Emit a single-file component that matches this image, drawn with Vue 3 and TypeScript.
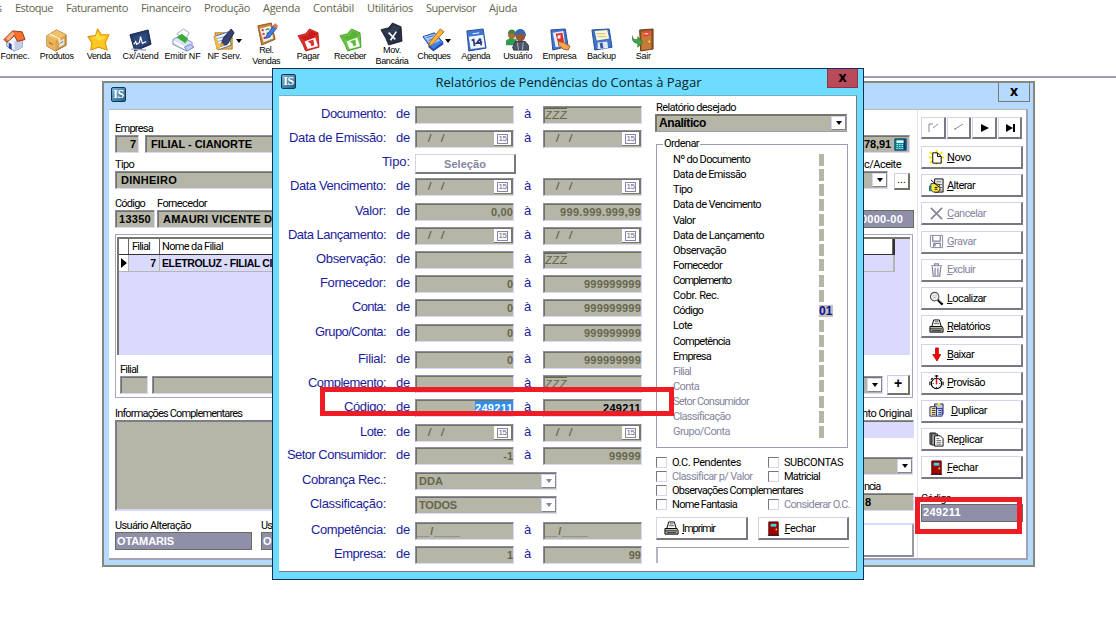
<script setup lang="ts">
interface Row {
  label: string
  w: number
  kind: 'text' | 'date' | 'button' | 'combo'
  from?: string
  to?: string
  left?: boolean
  active?: boolean
}

// Spreads the letters of a label over the given width.
const vFit = {
  mounted(el: HTMLElement, binding: { value: number }) {
    const width = el.getBoundingClientRect().width
    const count = (el.textContent || '').trim().length
    if (binding.value && count) el.style.letterSpacing = `${(binding.value - width) / count}px`
  },
}

const menu: [string, number][] = [
  ['Estoque', 38], ['Faturamento', 62], ['Financeiro', 50], ['Produção', 46], ['Agenda', 37],
  ['Contábil', 41], ['Utilitários', 46], ['Supervisor', 50], ['Ajuda', 28],
]

const tools: { icon: string; lines: [string, number][]; drop?: boolean }[] = [
  { icon: 'house', lines: [['Fornec.', 29]] },
  { icon: 'box', lines: [['Produtos', 34]] },
  { icon: 'star', lines: [['Venda', 24]] },
  { icon: 'board', lines: [['Cx/Atend', 36]] },
  { icon: 'print', lines: [['Emitir NF', 36]] },
  { icon: 'note', lines: [['NF Serv.', 34]], drop: true },
  { icon: 'clip', lines: [['Rel.', 14], ['Vendas', 28]] },
  { icon: 'red', lines: [['Pagar', 23]] },
  { icon: 'green', lines: [['Receber', 32]] },
  { icon: 'black', lines: [['Mov.', 18], ['Bancária', 33]] },
  { icon: 'cheque', lines: [['Cheques', 33]], drop: true },
  { icon: 'cal', lines: [['Agenda', 29]] },
  { icon: 'users', lines: [['Usuário', 29]] },
  { icon: 'company', lines: [['Empresa', 34]] },
  { icon: 'floppy', lines: [['Backup', 29]] },
  { icon: 'exit', lines: [['Sair', 15]] },
]

const card = (a: string, b: string, inner: string) =>
  `<path d="M1 8 9 6 13 1l9 4 1 15-14 4-3-7z" fill="${a}" stroke="${b}" stroke-width=".8"/><path d="m3 9 8-1 3-5 7 3-3 4-10 3z" fill="${inner}"/>`

const icons: Record<string, string> = {
  house: '<path d="M4 12v7l8 5 8-4v-8l-8-6z" fill="#f0f3fb" stroke="#5567a0" stroke-width=".8"/><path d="m12 14 8-3v9l-8 4z" fill="#c3cdec"/><path d="M1 12 10 3l10 1 3 8-8 2-3-6-8 7z" fill="#f8702a" stroke="#8b3a22" stroke-width="1"/><path d="m10 4-7 7 3 2 6-7z" fill="#ffb083"/><path d="M6 15l3 2v6l-3-2z" fill="#2639a0"/>',
  box: '<path d="M2 8 12 2l10 5v11l-11 6-9-5z" fill="#dca24a" stroke="#9b6a28"/><path d="M2 8l9 5v11l-9-5z" fill="#e9b45d"/><path d="M2 8 12 2l10 5-11 6z" fill="#f0c06b"/><path d="m6 6 10 5v4l-2-1v-3L4 7z" fill="#fff0c8"/><path d="m15 14 5-3v6l-5 3z" fill="#dfe9fa"/><path d="m4 15 4 2M16 16l3-2" stroke="#8a5b20"/>',
  star: '<path d="m11 1 4 6 8 0-4 8 2 8-9-3-8 3 1-8-4-6 8-1z" fill="#ffc821" stroke="#e39312" stroke-width="1.2" stroke-linejoin="round"/><path d="m11 4 2 5 7 0-6 4-9-3 4-1z" fill="#ffe046"/>',
  board: '<path d="m1 7 19-5 3 15-17 7z" fill="#253d6b" stroke="#16264c"/><path d="m4 9 14-4 2 11-13 5z" fill="#2f4a7c"/><path d="m5 17 2-3 1 3 3-2 1-6 2 7 4-2" fill="none" stroke="#fff" stroke-width="1.2"/><path d="m2 22 16 1" stroke="#a6b0c4" stroke-width="1.5"/>',
  print: '<path d="m6 6 7-5 6 4-4 7z" fill="#fff" stroke="#9ca8c8"/><path d="M2 12 9 8l13 7v5l-6 4L2 17z" fill="#d9e1f3" stroke="#7e8fb8"/><path d="m6 10 5-4 7 5-3 5z" fill="#39ad38"/><path d="m3 14 12 7 6-4" fill="none" stroke="#fff" stroke-width="2"/><path d="m14 20 6-3 4 3-7 4z" fill="#b9cdf5" stroke="#7189bc"/>',
  note: '<path d="M2 5h10l8 4v13H4z" fill="#f3b834" stroke="#b67b1f"/><path d="m1 9 15-5 3 14-14 5z" fill="#f4f7ff" stroke="#4d6ab5"/><path d="m4 11 8-2M5 14l8-2M6 17l6-2" stroke="#799be2"/><path d="m1 9 2-1 5 14-4 1z" fill="#f3b834"/><path d="m8 19 3-9L19 1l3 4-7 12z" fill="#36436f" stroke="#202b54"/><path d="m7 20 2-5 3 3z" fill="#f5a42b"/>',
  clip: '<path d="m3 4 14-3 4 17-14 6z" fill="#c98338" stroke="#8a5524"/><path d="m5 7 11-3 3 13-10 4z" fill="#edf2fb"/><path d="m7 8 2 1m-1 3 2 1m-1 3 2 1" stroke="#e02a20" stroke-width="2"/><path d="m11 8 4-1m-3 5 3-1m-2 5 3-1" stroke="#46a449" stroke-width="1.5"/><path d="m12 14 8-11 3 3-8 10-4 1z" fill="#417de0" stroke="#2550a1"/><path d="m19 4 2-3 3 3-2 3z" fill="#ef7636"/>',
  red: card('#e02e28', '#a11818', '#c81d1a') + '<path d="m8 14 11-4 3 9-11 3z" fill="#fff"/><path d="m11 14 6-2 1 6-3 1-1-3z" fill="#e33028"/>',
  green: card('#6cc544', '#3a8c29', '#58b434') + '<path d="m8 14 11-4 3 9-11 3z" fill="#f3fff0"/><path d="m11 14 6-2 1 6-3 1-1-3z" fill="#5fbb3b"/>',
  black: card('#273044', '#0e1423', '#333e55') + '<path d="m9 11 7 7m1-8-6 9" stroke="#f3f5ff" stroke-width="1.8"/>',
  cheque: '<path d="m1 9 12-4 9 10-11 8z" fill="#4380e4" stroke="#22489e"/><path d="m2 9 11-3 6 7-10 5z" fill="#a5c8ff"/><path d="m5 10 7-2m-5 5 7-3" stroke="#5269b5"/><path d="m8 15 11-14 4 3-12 13-4 2z" fill="#f7b53a" stroke="#b16d20"/><path d="m7 19 5 4 10-7" fill="none" stroke="#284eac" stroke-width="2"/>',
  cal: '<path d="m3 3 17-2 3 20-18 3z" fill="#4776c5" stroke="#264b9b"/><path d="m5 9 15-2 2 13-15 2z" fill="#f3f7ff"/><path d="m5 4 14-1 1 4-14 1z" fill="#3978dd"/><path d="m8 13 2-1 1 7m6-8-4 5 6-1m-2-4 1 7" fill="none" stroke="#263e74" stroke-width="1.8"/><path d="m9 6 7-1" stroke="#fff"/>',
  users: '<circle cx="6" cy="7" r="4" fill="#b86a35"/><path d="M2 6c0-6 8-6 8 0" fill="#428737"/><path d="M0 18v-5l5-3 6 2v6z" fill="#339b4b"/><circle cx="15" cy="9" r="5" fill="#985630"/><path d="M9 9C8-1 21-2 21 9l-3-3h-6z" fill="#3267bb"/><path d="m7 20 3-6h10l4 5v4H8z" fill="#515566" stroke="#2d3246"/><path d="m12 15 1 8m5-8-1 8" stroke="#abb2c7"/>',
  company: '<path d="m3 2 15-1 3 18-16 4z" fill="#4274ce" stroke="#244692"/><path d="m5 5 11-2 2 15-10 2z" fill="#e5efff"/><path d="m8 6 7-1 2 11-6 2z" fill="#de302a"/><path d="m10 8 3-1v4h-3z" fill="#fff"/><path d="m11 14 5 1 7 4-2 4-5-1-5-4z" fill="#f4a550" stroke="#a45d25"/>',
  floppy: '<path d="m2 2 18-1 3 19-18 3z" fill="#4173c7" stroke="#254995"/><path d="m5 3 13-1 2 9-13 2z" fill="#fff8cf"/><path d="M7 6h9m-8 3h9" stroke="#bdb990"/><path d="m8 15 10-1 1 7-11 1z" fill="#e2e8f5"/><path d="m10 16 3-1 1 6h-3z" fill="#3559a2"/>',
  exit: '<path d="m8 2 14-1v21l-13 2z" fill="#9a5525" stroke="#6c3717"/><path d="m10 4 10-1v19l-10 1z" fill="#c67c39"/><path d="m12 4 7-1v5l-7 1z" fill="#e94335"/><path d="M13 6h4" stroke="#fff"/><circle cx="18" cy="14" r="1" fill="#ffe071"/><path d="M0 8c1 4 3 4 6 4V9l5 6-5 5v-4c-4 0-6-3-6-8z" fill="#44a347" stroke="#26772e" stroke-width=".7"/>',
}

const glyphs: Record<string, string> = {
  novo: '<path d="m1 2 3 3M8 0v4m6-2-3 3M0 8h4m9 0h3M1 14l3-3m4 5v-4m6 2-3-3" stroke="#ffe800" stroke-width="2"/><path d="M4 3h5l4 4v7H4z" fill="#fff" stroke="#000"/><path d="M9 3v4h4" fill="none" stroke="#000"/>',
  alterar: '<path d="M6 1h9v14H6z" fill="#eee" stroke="#000"/><path d="M8 4h5m-3 3h4m-3 3h3m-3 3h3" stroke="#666"/><path d="M2 6h4l5 1v2l1 2-2 4H5l-3-2z" fill="#ffec45" stroke="#000" stroke-width=".8"/><path d="m2 2 9 8M6 10h3m-3 2h3" stroke="#000"/><path d="M0 8h2v6H0z" fill="#168080"/>',
  cancelar: '<path d="m2 2 12 12M14 2 2 14" stroke="#85859e" stroke-width="1.8"/>',
  gravar: '<path d="M1.500 1.500h13v13h-12l-1-1z" fill="#fff" stroke="#85859e"/><path d="M4 1.500v6h8v-6M5 14v-4h7v4M6.500 10v3" fill="none" stroke="#85859e" stroke-width="1.300"/>',
  excluir: '<path d="M2 4h12M6 4V2h4v2M3.500 5l1 10h7l1-10M6.500 6v8m3-8v8" fill="none" stroke="#85859e" stroke-width="1.300"/>',
  localizar: '<circle cx="6" cy="6" r="4.500" fill="#eee" stroke="#555" stroke-width="1.200"/><path d="M4 5h1m2 0h1M5 7h2" stroke="#8aa"/><path d="m9.500 9.500 5 5" stroke="#000" stroke-width="2.400"/><path d="m10.500 9.500 3 3" stroke="#d9d970" stroke-width=".8"/>',
  printer: '<path d="M3 8 5 1h6l2 7z" fill="#fff" stroke="#000"/><path d="M6 3h4M5 5h6" stroke="#555"/><path d="M1 8h13l1 2v4H1z" fill="#b8b8b0" stroke="#000"/><path d="M1 10.500h13M3 12.500h10" stroke="#000" stroke-width=".8"/><path d="M11 9h1" stroke="#e9de00"/>',
  baixar: '<path d="M7 1h3v7h2.500L8.500 15 4 8h3z" fill="#f00" stroke="#a00000" stroke-width=".8"/>',
  provisao: '<circle cx="8" cy="9" r="5.500" fill="#fff" stroke="#000" stroke-width="1.200"/><path d="M8 3V0M6 1h4M2 5l2-2m8 0 2 2M1 7v4m14-4v4" stroke="#000" stroke-width="1.200"/><path d="M8 4v6" stroke="#e00" stroke-width="1.600"/><path d="M4 9h1m6 0h1M8 13v1" stroke="#000"/>',
  duplicar: '<path d="M6 1h9v11H6z" fill="#bcc7e8" stroke="#202060"/><path d="M9 0h3v3H9z" fill="#ece52a"/><path d="M1 4h7v10H1z" fill="#fff89b" stroke="#202060"/><path d="M3 6h4M3 8h4m-4 2h4m-4 2h4" stroke="#303060"/><path d="M8 6h6v8H8z" fill="#d8e8ff" stroke="#202080"/><path d="M10 8h3m-3 2h3m-3 2h3" stroke="#202080"/>',
  replicar: '<path d="M1 1h6v12H1z" fill="#777" stroke="#222"/><path d="M3 2h6v12H3z" fill="#aaa" stroke="#222"/><path d="M6 4h6l3 3v8H6z" fill="#fff" stroke="#000"/><path d="M8 7h3m-3 2h5m-5 2h5m-5 2h5" stroke="#444" stroke-width=".8"/>',
  fechar: '<path d="M3 1h10v14H3z" fill="#a40000" stroke="#4e0000"/><path d="M5 3h6v3H5z" fill="#26e3e9"/><circle cx="11" cy="9" r=".9" fill="#ff0"/><path d="M2 15.500h12" stroke="#222"/>',
  calc: '<path d="M1 1h14v14H1z" fill="#078a94" stroke="#052c61"/><path d="M3 3h9v3H3z" fill="#fff"/><path d="M3 8h8M3 10.500h8M3 13h8" stroke="#dcffff" stroke-dasharray="2 1"/><path d="M13 2v12" stroke="#0a2b80" stroke-width="2"/>',
}

const rows: Row[] = [
  { label: 'Documento:', w: 65, kind: 'text', from: '', to: 'ZZZ', left: true },
  { label: 'Data de Emissão:', w: 97, kind: 'date' },
  { label: 'Tipo:', w: 28, kind: 'button' },
  { label: 'Data Vencimento:', w: 96, kind: 'date' },
  { label: 'Valor:', w: 31, kind: 'text', from: '0,00', to: '999.999.999,99' },
  { label: 'Data Lançamento:', w: 98, kind: 'date' },
  { label: 'Observação:', w: 70, kind: 'text', from: '', to: 'ZZZ', left: true },
  { label: 'Fornecedor:', w: 66, kind: 'text', from: '0', to: '999999999' },
  { label: 'Conta:', w: 34, kind: 'text', from: '0', to: '999999999' },
  { label: 'Grupo/Conta:', w: 71, kind: 'text', from: '0', to: '999999999' },
  { label: 'Filial:', w: 28, kind: 'text', from: '0', to: '999999999' },
  { label: 'Complemento:', w: 78, kind: 'text', from: '', to: 'ZZZ', left: true },
  { label: 'Código:', w: 42, kind: 'text', from: '249211', to: '249211', active: true },
  { label: 'Lote:', w: 26, kind: 'date' },
  { label: 'Setor Consumidor:', w: 99, kind: 'text', from: '-1', to: '99999' },
  { label: 'Cobrança Rec.:', w: 84, kind: 'combo', from: 'DDA' },
  { label: 'Classificação:', w: 76, kind: 'combo', from: 'TODOS' },
  { label: 'Competência:', w: 75, kind: 'text', from: '__/____', to: '__/____', left: true },
  { label: 'Empresa:', w: 52, kind: 'text', from: '1', to: '99' },
]

const valueWidth: Record<string, number> = {
  '0,00': 22, '999.999.999,99': 81, '999999999': 57, '249211': 38, '99999': 32, 'ZZZ': 22,
  '__/____': 43, 'DDA': 24, 'TODOS': 38,
}

const order: [string, number][] = [
  ['Nº do Documento', 77], ['Data de Emissão', 73], ['Tipo', 19], ['Data de Vencimento', 88],
  ['Valor', 22], ['Data de Lançamento', 91], ['Observação', 53], ['Fornecedor', 49],
  ['Complemento', 58], ['Cobr. Rec.', 46], ['Código', 30], ['Lote', 19], ['Competência', 57],
  ['Empresa', 38], ['Filial', 18], ['Conta', 26], ['Setor Consumidor', 76],
  ['Classificação', 57], ['Grupo/Conta', 57],
]

const checks: { t: string; w: number; off?: boolean; wide?: boolean }[] = [
  { t: 'O.C. Pendentes', w: 69 }, { t: 'SUBCONTAS', w: 59 },
  { t: 'Classificar p/ Valor', w: 80, off: true }, { t: 'Matricial', w: 36 },
  { t: 'Observações Complementares', w: 131, wide: true },
  { t: 'Nome Fantasia', w: 65 }, { t: 'Considerar O.C.', w: 66, off: true },
]

const actions: { g: string; pre?: string; key: string; rest: string; w: number; off?: boolean; shift?: boolean }[] = [
  { g: 'novo', key: 'N', rest: 'ovo', w: 24 },
  { g: 'alterar', key: 'A', rest: 'lterar', w: 28 },
  { g: 'cancelar', key: 'C', rest: 'ancelar', w: 39, off: true },
  { g: 'gravar', key: 'G', rest: 'ravar', w: 29, off: true },
  { g: 'excluir', key: 'E', rest: 'xcluir', w: 28, off: true },
  { g: 'localizar', key: 'L', rest: 'ocalizar', w: 39 },
  { g: 'printer', key: 'R', rest: 'elatórios', w: 43 },
  { g: 'baixar', key: 'B', rest: 'aixar', w: 27 },
  { g: 'provisao', key: 'P', rest: 'rovisão', w: 38 },
  { g: 'duplicar', key: 'D', rest: 'uplicar', w: 36, shift: true },
  { g: 'replicar', pre: 'Re', key: 'p', rest: 'licar', w: 36 },
  { g: 'fechar', key: 'F', rest: 'echar', w: 31 },
]
</script>

<template>
  <div class="screen">
    <nav class="menu">
      <span class="cut">s</span>
      <span v-for="m in menu" :key="m[0]" class="menu-item" :style="{ width: m[1] + 'px' }"><span v-fit="m[1]">{{ m[0] }}</span></span>
    </nav>
    <div class="tools">
      <div v-for="t in tools" :key="t.icon" class="tool" :class="{ tall: t.lines.length > 1 }">
        <div class="pic">
          <svg viewBox="0 0 24 25" v-html="icons[t.icon]"></svg>
          <i v-if="t.drop" class="tri"></i>
        </div>
        <div v-for="l in t.lines" :key="l[0]" class="tool-text"><span v-fit="l[1]">{{ l[0] }}</span></div>
      </div>
    </div>

    <section class="back">
      <header class="back-bar">
        <div class="logo"><b>IS</b></div>
        <div class="back-close">x</div>
      </header>
      <div class="back-body">
        <div class="form">
          <div class="line">
            <div class="cell c-num"><label><span v-fit="38">Empresa</span></label><div class="field right">7</div></div>
            <div class="cell grow"><label></label><div class="field pad"><span v-fit="101">FILIAL - CIANORTE</span></div></div>
            <div class="cell c-val"><label></label><div class="field val"><span v-fit="27">78,91</span><svg viewBox="0 0 16 16" v-html="glyphs.calc"></svg></div></div>
          </div>
          <div class="line second">
            <div class="cell grow"><label><span v-fit="19">Tipo</span></label><div class="field pad2"><span v-fit="56">DINHEIRO</span></div></div>
            <div class="cell c-acc"><label><span v-fit="37">c/Aceite</span></label><div class="accept"><div class="field combo"><i class="drop"></i></div><div class="dots">...</div></div></div>
          </div>
          <div class="line third">
            <div class="cell c-code"><label><span v-fit="30">Código</span></label><div class="field pad3"><span v-fit="32">13350</span></div></div>
            <div class="cell grow"><label><span v-fit="50">Fornecedor</span></label><div class="field pad2"><span v-fit="118">AMAURI VICENTE DO</span></div></div>
            <div class="cell c-doc"><label></label><div class="field purple"><span v-fit="42">0000-00</span></div></div>
          </div>
          <div class="panel">
            <div class="grid">
              <div class="g-row g-head"><span class="g0"></span><span class="g1"><span v-fit="18">Filial</span></span><span class="g2"><span v-fit="61">Nome da Filial</span></span></div>
              <div class="g-row g-data"><span class="g0"><i class="arrow"></i></span><span class="g1">7</span><span class="g2"><span v-fit="152">ELETROLUZ - FILIAL CIANORTE</span></span></div>
            </div>
            <label class="sub"><span v-fit="18">Filial</span></label>
            <div class="branch"><div class="field b1"></div><div class="field b2 combo"><i class="drop"></i></div><div class="plus">+</div></div>
          </div>
          <div class="lower">
            <div class="lower-left">
              <label><span v-fit="127">Informações Complementares</span></label>
              <div class="memo"></div>
              <div class="usr">
                <div class="cell u1"><label><span v-fit="76">Usuário Alteração</span></label><div class="field purple"><span v-fit="57">OTAMARIS</span></div></div>
                <div class="cell u2"><label><span v-fit="11">Us</span></label><div class="field purple"><span v-fit="16">OT</span></div></div>
              </div>
            </div>
            <div class="lower-right">
              <label><span v-fit="50">nto Original</span></label>
              <div class="field lav"></div>
              <div class="field combo low-combo"><i class="drop"></i></div>
              <label class="ncia"><span v-fit="16">ncia</span></label>
              <div class="field eight">8</div>
              <div class="blank"></div>
            </div>
          </div>
        </div>
        <aside class="side">
          <div class="navs">
            <div class="nav"><svg viewBox="0 0 16 12"><path d="M4 10V2h4M8 6l5-4" fill="none" stroke="#85859e" /></svg></div>
            <div class="nav"><svg viewBox="0 0 16 12"><path d="m5 7 8-5M4 7h2" fill="none" stroke="#85859e" /></svg></div>
            <div class="nav"><svg viewBox="0 0 16 12"><path d="m5 2 8 4-8 4z" /></svg></div>
            <div class="nav"><svg viewBox="0 0 16 12"><path d="m4 2 7 4-7 4z" /><path d="M11 2h2v8h-2z" /></svg></div>
          </div>
          <div class="acts">
            <div v-for="a in actions" :key="a.g" class="act" :class="{ off: a.off, shift: a.shift }">
              <svg viewBox="0 0 16 16" v-html="glyphs[a.g]"></svg>
              <span v-fit="a.w">{{ a.pre }}<u>{{ a.key }}</u>{{ a.rest }}</span>
            </div>
          </div>
          <label class="side-label"><span v-fit="30">Código</span></label>
          <div class="field purple side-code"><span v-fit="38">249211</span></div>
        </aside>
      </div>
    </section>

    <section class="front">
      <header class="front-bar">
        <div class="logo"><b>IS</b></div>
        <h1><span v-fit="266">Relatórios de Pendências do Contas à Pagar</span></h1>
        <div class="front-close">x</div>
      </header>
      <div class="front-body">
        <div class="filters">
          <div v-for="r in rows" :key="r.label" class="f-row">
            <div class="f-label" :class="{ wide: r.kind === 'button' }"><span v-fit="r.w">{{ r.label }}</span></div>
            <template v-if="r.kind === 'button'">
              <div class="select"><span v-fit="42">Seleção</span></div>
            </template>
            <template v-else-if="r.kind === 'combo'">
              <div class="f-de"></div>
              <div class="field combo f-combo"><span v-fit="valueWidth[r.from || '']">{{ r.from }}</span><i class="drop dim"></i></div>
            </template>
            <template v-else>
              <div class="f-de"><span v-fit="14">de</span></div>
              <div class="field f-field" :class="{ right: !r.left && r.kind === 'text', lit: r.active, date: r.kind === 'date' }">
                <template v-if="r.kind === 'date'"><em>/</em><em>/</em><i class="day"><b>15</b></i></template>
                <span v-else v-fit="valueWidth[r.from || ''] || 0" :class="{ picked: r.active }">{{ r.from }}</span>
              </div>
              <div class="f-a">à</div>
              <div class="field f-field" :class="{ right: !r.left && r.kind === 'text', lit: r.active, date: r.kind === 'date' }">
                <template v-if="r.kind === 'date'"><em>/</em><em>/</em><i class="day"><b>15</b></i></template>
                <span v-else v-fit="valueWidth[r.to || ''] || 0" :class="{ zed: r.to === 'ZZZ' }">{{ r.to }}</span>
              </div>
            </template>
          </div>
        </div>
        <div class="options">
          <label><span v-fit="80">Relatório desejado</span></label>
          <div class="field combo report"><span v-fit="47">Analítico</span><i class="drop"></i></div>
          <fieldset>
            <legend><span v-fit="35">Ordenar</span></legend>
            <div v-for="(o, i) in order" :key="o[0]" class="o-row" :class="{ dimmed: i > 13 }">
              <span v-fit="o[1]">{{ o[0] }}</span>
              <b :class="{ on: o[0] === 'Código' }">{{ o[0] === 'Código' ? '01' : '' }}</b>
            </div>
          </fieldset>
          <div class="checks">
            <div v-for="c in checks" :key="c.t" class="check" :class="{ dimmed: c.off, full: c.wide }"><i></i><span v-fit="c.w">{{ c.t }}</span></div>
          </div>
          <div class="btns">
            <div class="act"><svg viewBox="0 0 16 16" v-html="glyphs.printer"></svg><span v-fit="33"><u>I</u>mprimir</span></div>
            <div class="act"><svg viewBox="0 0 16 16" v-html="glyphs.fechar"></svg><span v-fit="31"><u>F</u>echar</span></div>
          </div>
          <div class="status"></div>
        </div>
      </div>
    </section>
    <div class="mark mark-filter"></div>
    <div class="mark mark-code"></div>
  </div>
</template>

<style>
body { background: #fff; overflow: hidden; }
</style>

<style scoped>
* { box-sizing: border-box; }
.screen { position: relative; width: 1116px; height: 620px; overflow: hidden; background: #fff; font: 11px/13px Roboto, 'Liberation Sans', sans-serif; color: #000; }
.screen span { white-space: nowrap; }
label { display: block; height: 13px; flex: none; }
svg { display: block; }

.menu { display: flex; gap: 13px; height: 16px; font: 11px/16px 'Open Sans', sans-serif; color: #65654c; }
.cut { width: 2px; font-size: 10px; display: flex; justify-content: flex-end; }
.menu-item { flex: none; }
.tools { display: grid; grid-template-columns: repeat(16, 41.9px); height: 62px; margin-left: -6px; border-bottom: 2px solid #9d9db8; width: 1130px; }
.tool { display: flex; flex-direction: column; align-items: center; padding-top: 12px; }
.tool.tall { padding-top: 6px; }
.pic { position: relative; height: 23px; }
.pic svg { width: 23px; height: 24px; }
.tri { position: absolute; left: 23px; top: 11px; border: 3px solid transparent; border-top: 4px solid #000; border-bottom: 0; }
.tool-text { font: 9px/11px 'Liberation Sans', sans-serif; height: 11px; }

.back { position: absolute; left: 102px; top: 81px; width: 933px; height: 486px; background: #b5d9ff; border: 2px solid #85887e; display: flex; flex-direction: column; padding: 0 5px 5px; }
.back-bar { height: 26px; display: flex; justify-content: space-between; }
.logo { width: 15px; height: 15px; border-radius: 2px; border: 1px solid #12364f; background: linear-gradient(135deg, #7db4cf, #20618d); display: flex; align-items: center; justify-content: center; color: #fff; }
.logo b { font: bold 12px/13px 'Liberation Serif', serif; letter-spacing: -.5px; }
.back-bar .logo { margin: 4px 0 0 2px; }
.back-close { width: 32px; height: 19px; margin-right: -2px; border: 1px solid #777a6c; border-top: 0; text-align: center; font: bold 14px/16px 'Open Sans', sans-serif; }
.back-body { flex: 1; background: #fff; display: flex; border-top: 1px solid #b9b9b0; border-right: 2px solid #a3a3b8; border-bottom: 2px solid #a3a3b8; padding-left: 6px; }
.form { width: 799px; padding-top: 12px; flex: none; }
.field { height: 18px; background: #b5b5a8; border: 1px solid #d9d9fb; border-top-color: #8c8ca6; border-left-color: #8c8ca6; box-shadow: inset 1px 1px 0 #73735f; padding: 1px 0 1px 1px; font: bold 11px/14px 'Liberation Sans', sans-serif; display: flex; align-items: center; overflow: hidden; }
.field > span { margin-top: -1px; }
.right { justify-content: flex-end; padding-right: 2px; }
.line { display: flex; gap: 6px; height: 31px; }
.second { margin-top: 5px; }
.third { margin-top: 8px; gap: 2px; }
.cell { display: flex; flex-direction: column; flex: none; }
.cell.grow { flex: 1; }
.c-num { width: 24px; }
.pad { padding-left: 5px; }
.pad2 { padding-left: 5px; }
.pad3 { padding-left: 3px; }
.c-val { width: 120px; margin-right: 4px; }
.val { justify-content: flex-end; gap: 3px; padding-right: 2px; }
.val svg { width: 13px; height: 13px; }
.c-acc { width: 102px; margin-right: 4px; }
.c-acc label { align-self: flex-end; margin-right: 9px; }
.accept { display: flex; gap: 6px; }
.accept .field { flex: 1; }
.dots { width: 16px; height: 17px; margin-top: 2px; border: 1px solid #ccccef; border-right: 2px solid #72726a; border-bottom: 2px solid #72726a; text-align: center; line-height: 12px; }
.combo { justify-content: flex-end; }
.drop { width: 15px; height: 100%; background: #fff; border: 1px solid #d5d5f5; border-right-color: #85858c; border-bottom-color: #85858c; display: flex; align-items: center; justify-content: center; flex: none; }
.drop::after { content: ''; border: 3.5px solid transparent; border-top: 4px solid #000; border-bottom: 0; }
.drop.dim::after { border-top-color: #85859e; }
.c-code { width: 40px; }
.c-doc { width: 180px; }
.purple { background: #8f8fa9; color: #fff; border-color: #6b6b60; box-shadow: none; padding-left: 1px; }
.c-doc .purple { justify-content: flex-end; padding-right: 10px; }
.panel { height: 164px; margin-top: 6px; width: 798px; border: 1px solid #a6a6c2; padding: 2px 2px 2px 1px; }
.grid { height: 118px; background: #dadaff; border-top: 2px solid #77776f; border-left: 2px solid #77776f; }
.g-row { display: flex; width: 776px; height: 16px; background: #fff; border-bottom: 1px solid #333; border-right: 2px solid #333; line-height: 15px; }
.g-row > span { border-right: 1px solid #666; }
.g0 { width: 10px; display: flex; align-items: center; background: #fff; }
.g1 { width: 31px; padding-left: 3px; }
.g2 { padding-left: 2px; flex: 1; }
.g-data { background: transparent; border-color: #b4b4b0; border-right-width: 1px; font: bold 10.5px/16px 'Liberation Sans', sans-serif; height: 17px; }
.g-data .g1 { text-align: right; padding-right: 3px; }
.g-data > span { border-color: #b4b4b0; }
.arrow { margin-left: 2px; border: 5px solid transparent; border-left: 6px solid #000; border-right: 0; }
.sub { margin: 8px 0 0 3px; }
.branch { display: flex; gap: 4px; padding-left: 3px; align-items: center; margin-top: -1px; }
.b1 { width: 28px; }
.b2 { flex: 1; }
.plus { width: 23px; height: 20px; border: 1px solid #ccccef; border-right: 2px solid #72726a; border-bottom: 2px solid #72726a; text-align: center; font: bold 14px/15px 'Liberation Sans', sans-serif; }
.lower { display: flex; gap: 10px; margin-top: 9px; }
.lower-left { flex: 1; }
.memo { height: 91px; background: #b5b5a8; border: 2px solid #d9d9fb; border-top-color: #7d7d88; border-left-color: #7d7d88; }
.usr { display: flex; gap: 9px; margin-top: 8px; }
.u1 { width: 137px; }
.u2 { width: 137px; }
.lower-right { width: 180px; display: flex; flex-direction: column; }
.lower-right > label { align-self: flex-end; margin-right: 2px; }
.lav { background: #dadaff; }
.low-combo { margin: 19px 1px 0 0; }
.lower-right > .ncia { margin: 5px 34px 0 0; }
.eight { justify-content: flex-end; padding-right: 42px; }
.blank { height: 34px; margin-top: 12px; border: 2px solid #8b8b98; border-color: #d9d9fb #99999f #8b8b98 #d9d9fb; }
.side { width: 109px; margin-left: 3px; padding: 7px 0 0 3px; border-left: 1px solid #e1e1f7; }
.navs { display: flex; gap: 1px; margin-bottom: 7px; }
.nav, .act, .select { background: #fff; border: 1px solid #d3d3f0; border-right: 2px solid #787883; border-bottom: 2px solid #787883; }
.nav { width: 24.6px; height: 22px; display: flex; align-items: center; justify-content: center; }
.nav svg { width: 16px; height: 12px; }
.acts { display: grid; grid-auto-rows: 28.23px; width: 102px; }
.act { height: 23px; display: flex; align-items: center; padding-left: 7px; gap: 3px; }
.act svg { width: 15px; height: 15px; flex: none; }
.act.shift { gap: 7px; }
.act.off, .dimmed { color: #85859e; }
.side-label { margin-top: 7px; }
.side-code { width: 102px; margin-top: -1px; height: 18px; }

.front { position: absolute; left: 272px; top: 68px; width: 592px; height: 512px; background: #6ddcff; border: 1px solid #162d5c; padding: 0 6px 7px; display: flex; flex-direction: column; }
.front-bar { height: 26px; display: flex; justify-content: space-between; }
.front-bar .logo { margin: 5px 0 0 2px; flex: none; }
.front-bar h1 { margin: 0 0 0 14px; flex: 1; text-align: center; font: 13px/27px 'Open Sans', sans-serif; color: #0b2029; }
.front-close { width: 31px; height: 19px; margin-right: -1px; background: #b84a5a; border: 1px solid #8d3548; border-top: 0; text-align: center; font: bold 14px/16px 'Open Sans', sans-serif; }
.front-body { flex: 1; background: #fff; border-top: 1px solid #71b0c5; border-right: 1px solid #777785; border-bottom: 1px solid #777785; display: flex; }
.filters { width: 376px; padding-top: 10px; flex: none; display: grid; align-content: start; grid-template-rows: 24px 24px 24px 25px 24px 24px 24px 24px 25px 27px 24px 24px 25px 23px 25px 24px 26px 24px 18px; }
.f-row { display: flex; height: 18px; }
.f-label, .f-de, .f-a { font: 13px/16px 'Liberation Sans', sans-serif; color: #1c1c9b; }
.f-label { width: 107px; text-align: right; }
.f-label.wide { width: 131px; margin-right: 5px; }
.f-de { width: 29px; padding-left: 10px; }
.f-a { width: 29px; padding-left: 10px; }
.f-field { width: 99px; color: #66664c; flex: none; }
.f-field.right { padding-right: 0; }
.f-field.lit { color: #000; }
.f-field .picked { background: #2f8fee; color: #fff; }
.zed { font-weight: normal; text-decoration: underline overline; text-decoration-thickness: 1px; text-underline-offset: -1px; font-style: italic; }
.f-field em { width: 4px; margin-left: 9px; font-size: 10px; }
.f-field em:first-child { margin-left: 11px; }
.day { margin-left: auto; width: 19px; height: 100%; background: #fff; border-right: 2px solid #77776a; border-bottom: 1px solid #77776a; display: flex; align-items: center; justify-content: center; }
.day b { width: 11px; height: 10px; border: 1px solid #8888a6; text-align: center; font: 8px/8px 'Liberation Sans', sans-serif; letter-spacing: -.5px; color: #66668c; }
.f-combo { width: 142px; color: #66664c; justify-content: space-between; padding-left: 3px; }
.select { width: 101px; height: 20px; text-align: center; font: bold 11px/18px 'Liberation Sans', sans-serif; color: #85859e; }
.options { width: 194px; padding-top: 5px; display: flex; flex-direction: column; }
.options > label { margin-left: 1px; }
.report { width: 192px; justify-content: space-between; padding-left: 3px; font-size: 12px; flex: none; }
.report { border-color: #77776f #9c9cae #9c9cae #77776f; }
fieldset { margin: 5px 0 0 1px; padding: 1px 0 0 16px; border: 1px solid #9c9cb5; height: 311px; width: 192px; min-inline-size: 0; flex: none; }
legend { padding: 0 1px 0 1px; margin-left: -10px; line-height: 14px; height: 14px; }
.o-row { display: flex; height: 15.14px; line-height: 15px; align-items: center; justify-content: space-between; padding-right: 14px; }
.o-row b { width: 14px; height: 12px; background: linear-gradient(90deg, #b5b5a8 5px, transparent 5px); }
.o-row b.on { background: #c2c2b8; color: #0d0d9a; font: bold 12px/12px 'Liberation Sans', sans-serif; }
.checks { display: grid; grid-template-columns: 112px 82px; grid-template-rows: 14px 14px 14px 14px; margin: 7px 0 0 1px; }
.check { display: flex; gap: 5px; align-items: center; }
.check.full { grid-column: 1 / 3; }
.check i { width: 11px; height: 11px; border: 1px solid #d5d5f5; border-top-color: #777783; border-left-color: #777783; flex: none; }
.btns { display: flex; gap: 10px; margin: 6px 0 0 1px; }
.btns .act { width: 92px; height: 23px; }
.btns .act:last-child svg { margin-right: 1px; }
.status { margin: 7px 0 0 1px; height: 16px; width: 193px; border-top: 1px solid #9c9cb5; border-left: 2px solid #b5b5c9; }
.mark { position: absolute; border: 5px solid #ee1c24; }
.mark-filter { left: 320px; top: 387px; width: 354px; height: 29px; }
.mark-code { left: 915px; top: 497px; width: 107px; height: 37px; }
</style>
